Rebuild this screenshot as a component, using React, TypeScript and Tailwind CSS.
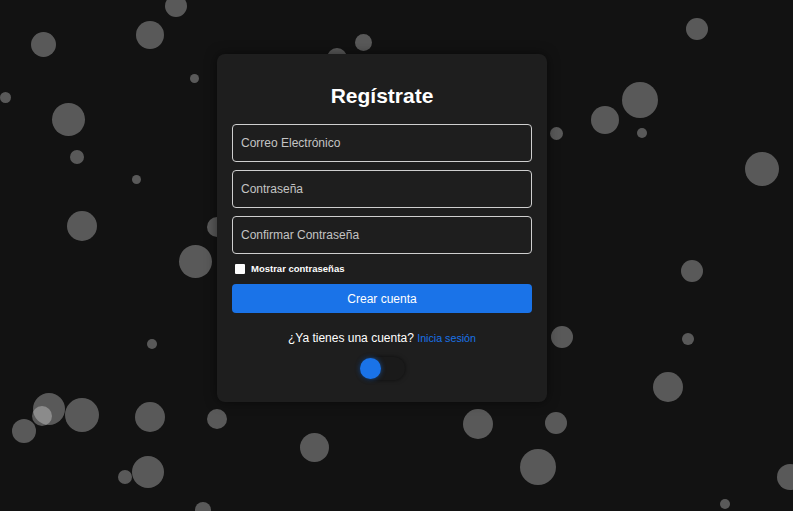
import { useState } from "react";

// burbujas de fondo: [x, y, radio]
const burbujas: [number, number, number][] = [
  [176, 6, 11], [43, 44, 12.5], [150, 35, 14], [194, 78, 4.5], [5, 97, 5.5],
  [68, 119, 16.5], [77, 157, 7], [136, 179, 4.5], [82, 226, 15], [217, 227, 10],
  [195, 261, 16.5], [363, 42, 8.5], [337, 58, 10], [697, 29, 11], [640, 100, 18],
  [605, 120, 14], [556, 133, 6.5], [642, 133, 5], [762, 169, 17], [692, 271, 11],
  [152, 344, 5], [49, 409, 16], [42, 416, 10], [82, 415, 17], [24, 431, 12],
  [150, 417, 15], [217, 419, 10], [314, 447, 14.5], [148, 472, 16], [125, 477, 7],
  [203, 510, 8], [562, 337, 11], [688, 339, 6], [668, 387, 15], [478, 424, 15],
  [556, 423, 11], [538, 467, 18], [790, 477, 13], [725, 504, 5],
];

export default function App() {
  const [mostrar, setMostrar] = useState(false);

  return (
    <div className="relative h-[511px] w-full overflow-hidden bg-[#121212] font-['Liberation_Sans',Arial,sans-serif]">
      {burbujas.map(([x, y, r], i) => (
        <span
          key={i}
          className="absolute rounded-full bg-white/30"
          style={{ left: x - r, top: y - r, width: r * 2, height: r * 2 }}
        />
      ))}

      <div className="relative flex pl-[217px] pt-[54px]">
        <div className="flex w-[330px] flex-col rounded-lg bg-[#1e1e1e] px-[15px] pb-[22px] pt-[28px] shadow-[0_0_12px_rgba(0,0,0,0.5)]">
          <h2 className="text-center text-[21px] font-bold leading-[28px] text-white">
            Regístrate
          </h2>

          <div className="mt-[14px] flex flex-col gap-2">
            {["Correo Electrónico", "Contraseña", "Confirmar Contraseña"].map((p, i) => (
              <input
                key={p}
                type={i === 0 ? "email" : mostrar ? "text" : "password"}
                placeholder={p}
                className="h-[38px] w-full rounded border border-[#cfcfcf] bg-transparent px-2 text-[12px] text-white outline-none placeholder:text-[#c4c4c4]"
              />
            ))}
          </div>

          <label className="mt-2 flex h-[14px] items-center gap-[6px] pl-[3px]">
            <input
              type="checkbox"
              checked={mostrar}
              onChange={(e) => setMostrar(e.target.checked)}
              className="h-[10px] w-[10px] appearance-none rounded-[1px] bg-white"
            />
            <span className="text-[9.5px] font-bold text-white">Mostrar contraseñas</span>
          </label>

          <button className="mt-2 h-[29px] w-full rounded bg-[#1a73e8] text-[12px] text-white">
            Crear cuenta
          </button>

          <p className="mt-[17px] text-center text-[12px] leading-[17px] text-white">
            ¿Ya tienes una cuenta?{" "}
            <a className="text-[10.7px] text-[#1a73e8]">Inicia sesión</a>
          </p>

          <div className="mt-[10px] flex justify-center">
            <div className="flex h-[23px] w-[45px] items-center rounded-full bg-[#1a1a1a] shadow-[0_0_4px_rgba(0,0,0,0.6)]">
              <span className="h-[21px] w-[21px] rounded-full bg-[#1a73e8] shadow-[0_0_5px_rgba(26,115,232,0.6)]" />
            </div>
          </div>
        </div>
      </div>
    </div>
  );
}
